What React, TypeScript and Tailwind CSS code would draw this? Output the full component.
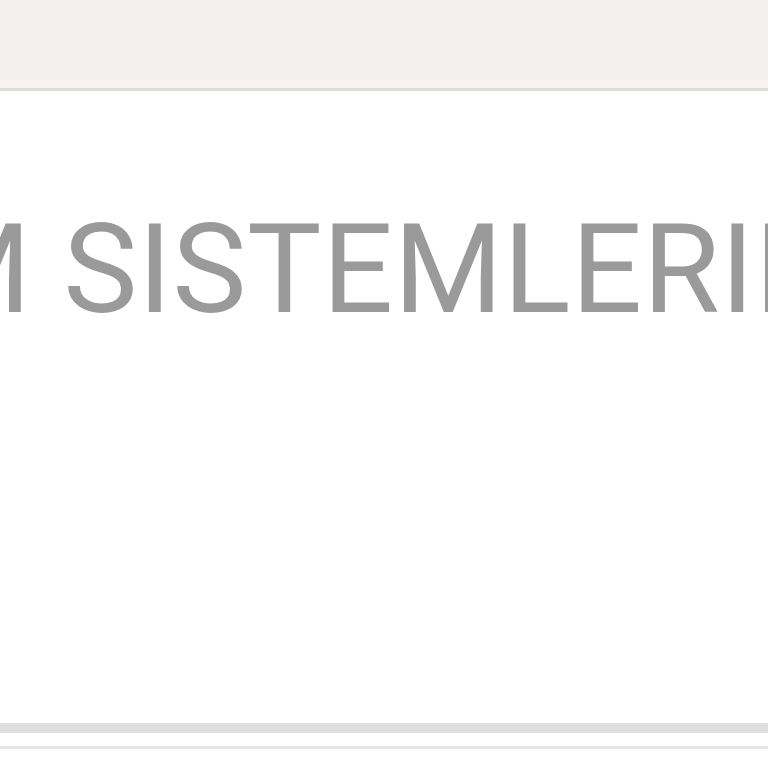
export default function App() {
  return (
    <div className="h-[768px] w-[768px] overflow-hidden bg-white flex flex-col">
      <header className="shrink-0">
        <div className="h-[80px] bg-[#f1f0ef]"></div>
        <div className="h-[8px] bg-[#f5f4f3]"></div>
        <div className="h-[3px] bg-[#dcdcdb]"></div>
      </header>

      <main className="h-[632px] shrink-0 overflow-hidden pt-[116px]">
        <h1
          className="ml-[-78px] whitespace-nowrap text-[125px] leading-none tracking-[0.5px] text-[#9a9a9a]"
          style={{ fontFamily: 'Roboto, "Noto Sans", sans-serif' }}
        >
          M SISTEMLERININ
        </h1>
      </main>

      <div className="h-[10px] shrink-0 bg-[#dedede]"></div>
      <div className="h-[13px] shrink-0"></div>
      <div className="h-[3px] shrink-0 bg-[#e6e6e6]"></div>
      <div className="flex-1"></div>
    </div>
  )
}
